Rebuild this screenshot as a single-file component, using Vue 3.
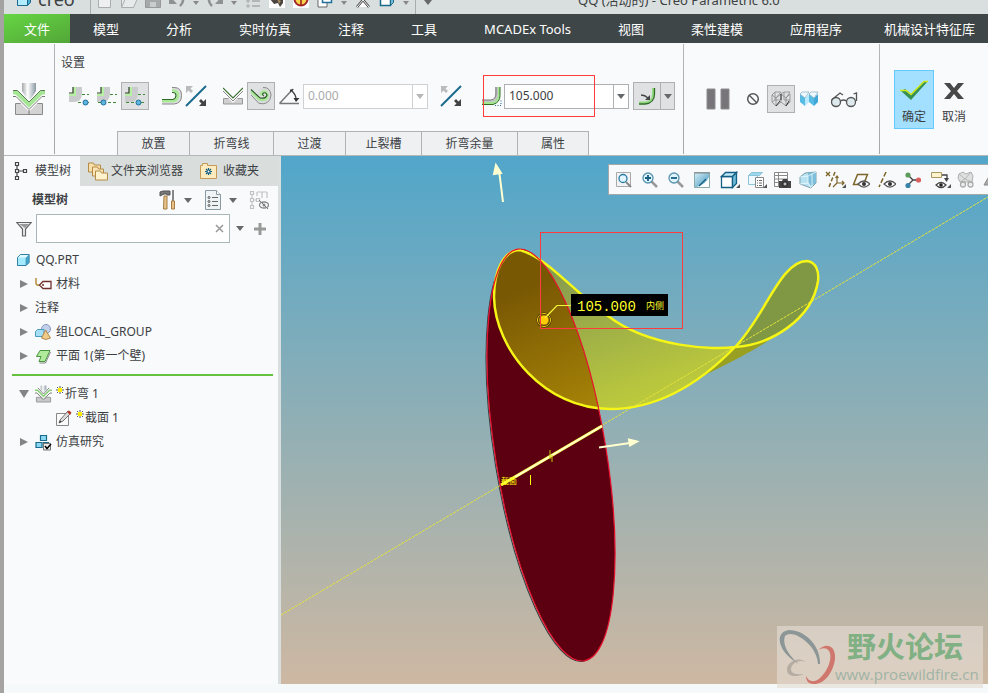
<script setup>
import { h, ref } from 'vue'

// Inner markup of every icon, keyed by name: [width, height, markup]
const icons = {
  cube: [16, 16, '<path d="M1.5 4.5h10v10h-10z" fill="#b3ecff" stroke="#1b6a8c"/><path d="M1.5 4.5l3-3h10l-3 3z" fill="#e6faff" stroke="#1b6a8c"/><path d="M11.5 4.5l3-3v10l-3 3z" fill="#4aa9cf" stroke="#1b6a8c"/>'],
  cubeWhite: [16, 16, '<path d="M1.5 4.500h10v10h-10z" fill="#fff" stroke="#1b6a8c" stroke-width="1.500"/><path d="M11.5 4.5l3-3v10l-3 3z" fill="#6db9d6" stroke="#1b6a8c"/>'],
  part: [14, 14, '<path d="M1.500 4.500L4.500 1.500H13V9.500L10 12.500H1.500z" fill="#a5eaff" stroke="#2f7fa3"/><path d="M10 12.500V4.500L13 1.500V9.500z" fill="#46a7cd" stroke="#2f7fa3" stroke-width=".6"/><path d="M2 4.500L4.700 2H12.500L10 4.500z" fill="#dff9ff"/>'],
  page: [14, 18, '<path d="M.5.5h12v17H.5z" fill="#eef0f0" stroke="#a9adad"/>'],
  open: [17, 18, '<path d="M.5 17V3h5l2 2h6v4" fill="#e7eaea" stroke="#a9adad"/><path d="M.5 17.500l4-9h12l-4 9z" fill="#e7eaea" stroke="#a9adad"/>'],
  save: [16, 18, '<path d="M.5.5h15v17H.5z" fill="#a6a9a9" stroke="#999"/><path d="M3 1h10v9H3z" fill="#e4e6e6"/><path d="M5 12h6v5H5z" fill="#c9cccc"/>'],
  undo: [18, 18, '<path d="M4 6c8-4 15 3 8 10" fill="none" stroke="#8e9292" stroke-width="2.500"/><path d="M1 5v9h8z" fill="#8e9292"/>'],
  redo: [18, 18, '<path d="M14 6C6 2-1 9 6 16" fill="none" stroke="#8e9292" stroke-width="2.500"/><path d="M17 5v9H9z" fill="#8e9292"/>'],
  list: [15, 18, '<path d="M1 5h2v2H1zM1 10h2v2H1zM1 15h2v2H1z" fill="none" stroke="#a5a9a9"/><path d="M6 6h8M6 11h8M6 16h8" stroke="#a5a9a9" stroke-width="1.500"/>'],
  photo: [16, 18, '<path d="M0 0h16v18H0z" fill="#fff"/><path d="M2 4l6 2 6-3v10l-3 4-2-4-4 1-4-5z" fill="#4c4540"/><path d="M8 9l4 2-2 3z" fill="#a58b60"/>'],
  gauge: [16, 18, '<path d="M0 0h16v18H0z" fill="#fff"/><circle cx="8" cy="9" r="6.500" fill="#f8d54c" stroke="#a3262b" stroke-width="2"/><path d="M8 9l4-6M8 9v6M3 9h10" stroke="#9c1515" stroke-width="1.500"/>'],
  windows: [16, 18, '<path d="M1 9h9v8H1z" fill="#fff" stroke="#666"/><path d="M5.500 3.500h9v9h-9z" fill="#fff" stroke="#1f6f9a" stroke-width="1.500"/>'],
  closewin: [14, 18, '<path d="M1 17l6-7 6 7" fill="#fff" stroke="#444" stroke-width="2.500"/><path d="M1 17l6-7 6 7" fill="none" stroke="#fff"/>'],
  bend: [32, 32, '<path d="M9 0h14v8l-5 8h-4L9 8z" fill="url(#steel)"/><path d="M2.500 20.500h9l4.500 5 4.500-5h9v11h-27z" fill="#d3d3d3" stroke="#8a8a8a"/><path d="M0 10h3l13 13 13-13h3" fill="none" stroke="#fff" stroke-width="8"/><path d="M0 9.500h3.500L16 22l12.500-12.500H32" fill="none" stroke="#a5e696" stroke-width="4"/><path d="M0 7.500h4.500L16 19 27.500 7.500H32" fill="none" stroke="#5c7a54"/><path d="M0 13.500h3L16 26.500l13-13h3M16 27v5" fill="none" stroke="#777"/>'],
  bendS: [18, 18, '<path d="M6 0h6v4l-3 4-3-4z" fill="url(#steel)"/><path d="M1.500 12.500h4L9 15l3.500-2.500h4v5h-15z" fill="#c9c9c9" stroke="#999"/><path d="M0 5h2.500L9 11.500 15.500 5H18" fill="none" stroke="#fff" stroke-width="5"/><path d="M0 5h2.500L9 11.500 15.500 5H18" fill="none" stroke="#82cd72" stroke-width="1.500"/><path d="M0 8h2l7 6.500L16 8h2M3 2.500l6 6.500 6-6.500" fill="none" stroke="#777"/>'],
  side1: [24, 20, '<path d="M2 8h6V1h7v6q0 9-8 9H2z" fill="#c9cbcd"/><path d="M2 8h4V1h3v9H2z" fill="#b7efa4"/><path d="M2 7h4V1" fill="none" stroke="#2c3a28" stroke-width="1.200"/><path d="M15 8.500h7M11 16.500h11" stroke="#3f8a35" stroke-dasharray="3 2"/><circle cx="18.500" cy="16.500" r="2.500" fill="#5cb6e0" stroke="#1f6f9a"/>'],
  side2: [24, 20, '<path d="M2 8h6V1h7v6q0 9-8 9H2z" fill="#c9cbcd"/><path d="M2 8h4V1h3v9H2z" fill="#b7efa4"/><path d="M2 7h4V1" fill="none" stroke="#2c3a28" stroke-width="1.200"/><path d="M15 8.500h7M3 16.500h19" stroke="#3f8a35" stroke-dasharray="3 2"/><circle cx="8.500" cy="16.500" r="2.500" fill="#5cb6e0" stroke="#1f6f9a"/>'],
  side3: [24, 20, '<path d="M2 8h6V1h7v6q0 9-8 9H2z" fill="#c9cbcd"/><path d="M2 8h4V1h3v9H2z" fill="#b7efa4"/><path d="M2 7h4V1" fill="none" stroke="#2c3a28" stroke-width="1.200"/><path d="M15 8.500h7M3 16.500h19" stroke="#3f8a35" stroke-dasharray="3 2"/><circle cx="15.500" cy="16.500" r="2.500" fill="#5cb6e0" stroke="#1f6f9a"/>'],
  hook: [20, 20, '<path d="M10 3h1q7 0 7 6.500T11 16H0" fill="none" stroke="#dcdedf" stroke-width="4"/><path d="M10 1.500h2q7.500 0 7.500 8t-7.500 8.500H0" fill="none" stroke="#888"/><path d="M10 4.500h1q5 0 5 5t-5 5.500H0" fill="none" stroke="#a6e894" stroke-width="2.500"/><path d="M10 6.500h1q3 0 3 3t-3 4H0" fill="none" stroke="#2f6b25" stroke-width="1.200"/>'],
  flip: [22, 22, '<path d="M1 21L21 1" stroke="#1b6a8c" stroke-width="2"/><path d="M1 1h7L5.500 3.500 8 6 6 8 3.500 5.500 1 8z" fill="#b9bbbd"/><path d="M21 21h-7l2.500-2.500L14 16l2-2 2.500 2.500L21 14z" fill="#444"/>'],
  vee: [20, 18, '<path d="M.500 11.500h6L10 14l3.500-2.500h6v5.500H.500z" fill="#d0d0d0" stroke="#999"/><path d="M0 3l10 10L20 3" fill="none" stroke="#fff" stroke-width="4"/><path d="M0 1l10 10L20 1" fill="none" stroke="#37732b" stroke-width="1.200"/><path d="M0 4l10 10L20 4" fill="none" stroke="#888"/>'],
  spiral: [22, 20, '<path d="M1 7l8 8q10 2 11-6-1-7-7-6-5 2-3 6" fill="none" stroke="#d9dbdb" stroke-width="3"/><path d="M1 9l8 8.500q11 2 12-8.500-1-8-8-7.500" fill="none" stroke="#8a8c8c"/><path d="M1 5.500l8 8q8 2 9-4-1-5-5-4-3 1.500-1.500 4" fill="none" stroke="#a6e894" stroke-width="2"/><path d="M1 3.500l9 8.500q6 1 7-3-1-3-3.500-2-2 1.500.500 3" fill="none" stroke="#2f5e28" stroke-width="1.200"/>'],
  angle: [22, 18, '<path d="M1.500 16.500H21M1.500 16.500L15 2" fill="none" stroke="#777" stroke-width="1.500"/><path d="M14 4q4 4 4 8" fill="none" stroke="#444" stroke-width="1.300"/><path d="M12 5.500V2.500h4zM15.500 11h6L18 15z" fill="#333"/>'],
  length: [20, 20, '<path d="M0 16h10q5-1 5-7V1" fill="none" stroke="#c3c5c7" stroke-width="4"/><path d="M0 14h9q5-1 5-6V1" fill="none" stroke="#777"/><path d="M0 17h11q6-2 6-8V1" fill="none" stroke="#a0e78d" stroke-width="2"/><path d="M0 18.500h11q7-2 7-9V1" fill="none" stroke="#2f6b25"/><path d="M13 19.500h6v-6" fill="none" stroke="#1b6a8c" stroke-dasharray="1 1.500"/>'],
  inner: [18, 18, '<path d="M1 15.500h6q8-1 8-9V1" fill="none" stroke="#91da80" stroke-width="2"/><path d="M1 17h6q9.500-1 9.500-10V1" fill="none" stroke="#2f6b25" stroke-width="1.300"/><path d="M3 8q4 0 7 3" fill="none" stroke="#444" stroke-width="1.300"/><path d="M12 8v5H7z" fill="#444"/>'],
  pause: [24, 22, '<path d="M1 1h8v20H1zM15 1h8v20h-8z" fill="#777579" stroke="#8f8d91"/>'],
  none: [14, 14, '<circle cx="7" cy="7" r="5.300" fill="none" stroke="#555" stroke-width="1.500"/><path d="M3 3l8 8" stroke="#555" stroke-width="1.500"/>'],
  wire: [20, 18, '<path d="M1 5l4 3v8l-4-4zM5 8l5-4v8l-5 4M10 4l5 4v8l-5-4M15 8l4-4v8l-4 4M1 5l3-3h6l-5 6M10 4l3-2h6l-4 6M4 2v8l-3 2M13 2v8M4 10h6M13 10h6" fill="none" stroke="#8a8c8e" stroke-width=".8"/><path d="M5 16l4-5M10 4v6M15 16l3-5" fill="none" stroke="#333"/>'],
  solid: [20, 16, '<path d="M1 3l5 4v8l-5-4z" fill="#56bce4"/><path d="M6 7l4-4v8l-4 4z" fill="#b9eaff"/><path d="M10 3l5 4v8l-5-4z" fill="#56bce4"/><path d="M15 7l4-4v8l-4 4z" fill="#3fa8d8"/><path d="M1 3l2-2h7L6 7zM10 3l2-2h7l-4 6z" fill="#eefaff" stroke="#88abb9" stroke-width=".7"/>'],
  glasses: [28, 18, '<circle cx="6" cy="12" r="4.500" fill="#dde9ec" stroke="#555" stroke-width="1.300"/><circle cx="21" cy="12" r="4.500" fill="#dde9ec" stroke="#555" stroke-width="1.300"/><path d="M10.500 11q3-2 6 0M1.500 10L10 3l3 2M26.500 11V3l-3 1" fill="none" stroke="#555" stroke-width="1.300"/>'],
  check: [30, 22, '<path d="M2 11l4-2 6 5L25 1h4L12 20z" fill="#369155"/><path d="M1 10.500h6l5 4L25 1.500h4" fill="none" stroke="#cdea1b" stroke-width="1.500"/>'],
  cross: [22, 18, '<path d="M1 1h6l4 5 4-5h6l-7 8 7 8h-6l-4-5-4 5H1l7-8z" fill="#484848"/>'],
  tree: [14, 20, '<path d="M1.500 1.500h3v3h-3zM1.500 8.500h3v3h-3zM1.500 15.500h3v3h-3zM9.500 8.500h3v3h-3zM3 5v3M3 12v3M5 10h4" fill="none" stroke="#444" stroke-width="1.200"/>'],
  folders: [20, 20, '<path d="M.5 2h5l1 2h6v7H.5z" fill="#f8dfa9" stroke="#b48a47"/><path d="M4.500 6h5l1 2h5v7h-11z" fill="#fae5b7" stroke="#b48a47"/><path d="M7.500 10h5l1 2h6v7h-12z" fill="#fff2cc" stroke="#b48a47"/>'],
  favorite: [18, 16, '<path d="M.5 2.500h2v-2h5v2h9v13H.500z" fill="#fdebc0" stroke="#c49a55"/><path d="M8.500 5v7M5 8.500h7M6 6l5 5M11 6l-5 5" stroke="#115e80" stroke-width="1.200"/><circle cx="8.500" cy="8.500" r="1" fill="#fff"/>'],
  hammer: [18, 20, '<path d="M1 2l3-1h7v4H8V4H5L1 6z" fill="#777" stroke="#555"/><path d="M5 6h3v13H4.500z" fill="#e8c288" stroke="#a37d45"/><path d="M14 0v11" stroke="#888" stroke-width="2"/><path d="M12.500 11h3v8h-3z" fill="#e8c288" stroke="#a37d45"/>'],
  doc: [18, 20, '<path d="M1.500.5h11l4 4v15h-15z" fill="#eef4f6" stroke="#8a99a1"/><path d="M12.500.5v4h4" fill="#fff" stroke="#8a99a1"/><path d="M8 7.500h6M8 11.500h6M8 15.500h6" stroke="#666"/><circle cx="5" cy="7.500" r="1" fill="none" stroke="#555"/><circle cx="5" cy="11.500" r="1" fill="none" stroke="#555"/><circle cx="5" cy="15.500" r="1" fill="none" stroke="#555"/>'],
  hide: [20, 20, '<path d="M1.500 1.500h3v3h-3zM1.500 8.500h3v3h-3zM1.500 15.500h3v3h-3zM7.500 8.500h3v3h-3zM3 5v3M3 12v3M5 10h2M8 2h10M13 2v6M18 2v6M8 2v4" fill="none" stroke="#c1c3c3" stroke-width="1.200"/><ellipse cx="15" cy="15" rx="4.500" ry="3" fill="none" stroke="#888" stroke-width="1.300"/><circle cx="15" cy="15" r="1.500" fill="#888"/><path d="M10 10l9 9" stroke="#777"/>'],
  funnel: [16, 16, '<path d="M.700 1.500h14.600L9.500 8v7h-3V8z" fill="#eee" stroke="#666" stroke-width="1.200"/><path d="M3 3h10L9 7z" fill="#999"/>'],
  tag: [17, 14, '<path d="M1 1v5q0 3 5 2" fill="none" stroke="#b78c3f" stroke-width="1.500"/><path d="M8 4.500h8v7H8L4.500 8z" fill="#fff" stroke="#70332b" stroke-width="1.300"/><circle cx="8" cy="8" r="1" fill="#70332b"/>'],
  group: [17, 16, '<circle cx="11" cy="5" r="4.500" fill="#c3d0ea" stroke="#8798bd"/><path d="M.500 7.500l2-2H9v5l-2 2H.500z" fill="#a3def5" stroke="#4b9bbd"/><path d="M10.500 6l5 8q-5 3-9 0z" fill="#efca86" stroke="#ae8a52"/>'],
  plane: [16, 15, '<path d="M4.500 1.500h10L9.500 12.500h-6l2-5H1z" fill="#b0eb9c" stroke="#4a9340"/><path d="M4 14h6l5-11" fill="none" stroke="#888"/>'],
  sketch: [17, 17, '<path d="M1.500 3.500h12v12h-12z" fill="#fbfbfb" stroke="#888"/><path d="M4 13l1-3 8-9 3 2-8 8z" fill="#ddd" stroke="#555" stroke-width=".8"/><path d="M12 2l2-1.500 2.500 2L15 5z" fill="#b63c2e"/><path d="M4 13l1.500-2.500 1 1z" fill="#222"/>'],
  study: [17, 17, '<path d="M5.500 1.500h6v5h-6zM1 8.500h6v5H1zM8.500 8.500h5v5h-5z" fill="#8bd8f4" stroke="#1b6a8c" stroke-width="1.200"/><path d="M8.500 9.500h7v6.500h-7z" fill="#eee" stroke="#777"/><path d="M10 12l2 2.500 4-4.500" fill="none" stroke="#000" stroke-width="1.500"/>'],
  star: [8, 8, '<path d="M4 0v8M0 4h8M1 1l6 6M7 1L1 7" stroke="#333" stroke-width=".8"/><path d="M2 2h4v4H2z" fill="#ffee00"/>'],
  zfit: [18, 18, '<path d="M1.500 1.500h14v14h-14z" fill="#f1f3f4" stroke="#aaa"/><circle cx="8" cy="7.500" r="4" fill="#e2f6ff" stroke="#287ba3" stroke-width="1.300"/><path d="M11 11l5 5" stroke="#888" stroke-width="2"/>'],
  zin: [18, 18, '<path d="M10 10l6 6" stroke="#999" stroke-width="2.500"/><circle cx="7" cy="7" r="5" fill="#e0f4fc" stroke="#5793af" stroke-width="1.300"/><path d="M7 4v6M4 7h6" stroke="#155f85" stroke-width="1.800"/>'],
  zout: [18, 18, '<path d="M10 10l6 6" stroke="#999" stroke-width="2.500"/><circle cx="7" cy="7" r="5" fill="#e0f4fc" stroke="#5793af" stroke-width="1.300"/><path d="M4 7h6" stroke="#155f85" stroke-width="1.800"/>'],
  repaint: [18, 18, '<path d="M1.500 1.500h15v15h-15z" fill="url(#sky)" stroke="#8aa"/><path d="M4 16q9-3 12-10v10z" fill="#fff"/><path d="M6 15l7-7" stroke="#155f85" stroke-width="1.300"/><path d="M1 2h16" stroke="#888"/>'],
  shade: [18, 18, '<path d="M1.500 5.500h11v11h-11z" fill="#fff" stroke="#155f85" stroke-width="1.300"/><path d="M1.500 5.500l4-4h11l-4 4z" fill="#bdeaf9" stroke="#155f85" stroke-width="1.300"/><path d="M12.500 5.500l4-4v11l-4 4z" fill="#6db9d6" stroke="#155f85" stroke-width="1.300"/>'],
  saved: [18, 18, '<path d="M1.500 4.500h9v9h-9z" fill="#eefaff" stroke="#8bc4d9"/><path d="M1.500 4.500l3-3h11l-3 3z" fill="#9bd9ee" stroke="#8bc4d9"/><path d="M8.500 6.500h8v10h-8z" fill="#fff" stroke="#888"/><path d="M10 9.500h1M12 9.500h3M10 12h1M12 12h3M10 14.500h1M12 14.500h3" stroke="#666"/>'],
  manager: [18, 18, '<path d="M1.500 1.500h13v14h-13zM1 4.500h13M1 8h13M1 11.500h13M5.500 2v14" fill="#fff" stroke="#888"/><path d="M6 10h3l1-2h4l1 2h3v7H6z" fill="#444"/><circle cx="12" cy="13" r="2.200" fill="#bbb" stroke="#111"/>'],
  persp: [18, 18, '<path d="M1 6l5-4 11-1v11l-5 5-11-4z" fill="#b7e2f1" stroke="#7d9eac"/><path d="M9 2l8-1v11l-5 3-3-4z" fill="#7dbfda"/><path d="M1 6l8-1v7l-8 1M9 12l3 5M9 5l8-4M13 3v13" fill="none" stroke="#eefaff" stroke-width=".8"/>'],
  datum: [20, 18, '<path d="M1 1l4 4M5 1L1 5" stroke="#7d6428" stroke-width="1.300"/><path d="M10 1L4 16" stroke="#7d6428" stroke-width="1.500" stroke-dasharray="4 2"/><path d="M12 5v7h7M12 12l-4 4M17 10l2 2-2 2M10.500 7L12 5l1.500 2" fill="none" stroke="#7d6428" stroke-width="1.200"/>'],
  planeEye: [18, 18, '<path d="M5.500 3.500h10l-4 10H1.500z" fill="none" stroke="#7d6428" stroke-width="1.500"/><path d="M6 13q6-6 12 0-6 6-12 0z" fill="#fff" stroke="#555" stroke-width="1.200"/><circle cx="12" cy="13" r="2" fill="#333"/>'],
  axisEye: [18, 18, '<path d="M8 1L1 16" stroke="#7d6428" stroke-width="1.500" stroke-dasharray="5 2"/><path d="M6 13q6-6 12 0-6 6-12 0z" fill="#fff" stroke="#555" stroke-width="1.200"/><circle cx="12" cy="13" r="2" fill="#333"/>'],
  spin: [18, 18, '<path d="M4 4l5 5h5M9 9l-5 5" fill="none" stroke="#444" stroke-width="1.300"/><circle cx="4" cy="4" r="2.600" fill="#5c9c5c"/><circle cx="14.500" cy="9" r="2.600" fill="#da5f5f"/><circle cx="4" cy="14.500" r="2.600" fill="#3a84ab"/>'],
  noteEye: [20, 18, '<path d="M1.500 1.500h10v5h-10z" fill="#fff3cd" stroke="#aa9660"/><path d="M12 4h5v4" fill="none" stroke="#444" stroke-width="1.300"/><path d="M14 7h5l-2.500 4z" fill="#444"/><path d="M6 14q5-5 10 0-5 5-10 0z" fill="#fff" stroke="#444" stroke-width="1.200"/><circle cx="11" cy="14" r="1.800" fill="#222"/>'],
  meshGlass: [18, 18, '<path d="M2 3l4-2 3 2 5-2 2 4-1 6H3L1 7z" fill="#dedfdf" stroke="#b0b0b0"/><path d="M2 3l6 5 6-7M8 8l7 3M3 11l5-3" fill="none" stroke="#b8b8b8"/><circle cx="6" cy="13.500" r="2.500" fill="#eee" stroke="#aaa" stroke-width="1.300"/><circle cx="13.500" cy="13.500" r="2.500" fill="#eee" stroke="#aaa" stroke-width="1.300"/>'],
  cone: [18, 18, '<path d="M1 14L8 2l8 12z" fill="#aaa" stroke="#888"/>'],
}

function Ic({ name }) {
  const [w, hgt, inner] = icons[name]
  return h('svg', { width: w, height: hgt, viewBox: `0 0 ${w} ${hgt}`, 'aria-hidden': 'true', innerHTML: inner })
}
Ic.props = ['name']

const quick = [
  ['page', '新建'], ['open', '打开'], ['save', '保存'], ['undo', '撤消'], ['', '撤消列表'],
  ['redo', '重做'], ['', '重做列表'], ['list', '重新生成'], ['photo', '外观'], ['gauge', '测量'],
  ['windows', '窗口'], ['', '窗口列表'], ['closewin', '关闭'], ['cubeWhite', '模型显示'], ['', '显示列表'],
]
const menus = ['模型', '分析', '实时仿真', '注释', '工具', 'MCADEx Tools', '视图', '柔性建模', '应用程序', '机械设计特征库']
const panels = ['放置', '折弯线', '过渡', '止裂槽', '折弯余量', '属性']
const viewTools = [
  ['zfit', '重新调整'], ['zin', '放大'], ['zout', '缩小'], ['repaint', '重画'], ['shade', '显示样式', true],
  ['saved', '已保存方向', true], ['manager', '视图管理器'], ['persp', '透视图'], ['datum', '基准显示', true],
  ['planeEye', '平面显示'], ['axisEye', '轴显示'], ['spin', '旋转中心'], ['noteEye', '注释显示', true],
  ['meshGlass', '仿真显示'], ['cone', '模拟'],
]
const upper = [
  { icon: 'tag', text: '材料' },
  { icon: '', text: '注释' },
  { icon: 'group', text: '组LOCAL_GROUP' },
  { icon: 'plane', text: '平面 1(第一个壁)' },
]
const angle = ref('0.000')
const length = ref('105.000')
const filter = ref('')
</script>

<template>
  <div class="app">
    <svg class="defs" width="0" height="0" aria-hidden="true">
      <defs>
        <linearGradient id="steel"><stop offset="0" stop-color="#a5a8aa" /><stop offset=".4" stop-color="#fff" /><stop offset="1" stop-color="#8a9aa4" /></linearGradient>
        <linearGradient id="sky" x1="0" y1="0" x2="1" y2="1"><stop offset="0" stop-color="#d8f1fa" /><stop offset="1" stop-color="#3d91b8" /></linearGradient>
      </defs>
    </svg>

    <header class="titlebar">
      <div class="brand"><Ic name="cube" /><span>creo</span></div>
      <div class="quick">
        <button v-for="([icon, label], i) in quick" :key="i" :class="{ slim: !icon }" :aria-label="label">
          <Ic v-if="icon" :name="icon" /><i v-else class="caret"></i>
        </button>
      </div>
      <button class="more" aria-label="自定义"><i class="caret"></i></button>
      <div class="doc-title">QQ (活动的) - Creo Parametric 6.0</div>
    </header>

    <nav class="menubar">
      <button class="file">文件</button>
      <button v-for="m in menus" :key="m">{{ m }}</button>
    </nav>

    <section class="ribbon">
      <div class="feature"><Ic name="bend" /></div>
      <div class="settings">
        <div class="heading">设置</div>
        <div class="controls">
          <div class="group">
            <button class="tool" aria-label="外侧"><Ic name="side1" /></button>
            <button class="tool" aria-label="折弯线"><Ic name="side2" /></button>
            <button class="tool on" aria-label="另一侧"><Ic name="side3" /></button>
          </div>
          <div class="group">
            <button class="tool narrow" aria-label="固定侧"><Ic name="hook" /></button>
            <button class="tool narrow" aria-label="反向"><Ic name="flip" /></button>
          </div>
          <div class="group">
            <button class="tool" aria-label="角度折弯"><Ic name="vee" /></button>
            <button class="tool on" aria-label="轧折弯"><Ic name="spiral" /></button>
            <label class="tool" for="angle"><Ic name="angle" /></label>
            <div class="combo off">
              <input id="angle" v-model="angle" aria-label="角度" disabled />
              <button aria-label="角度列表" disabled><i class="caret"></i></button>
            </div>
          </div>
          <button class="tool narrow" aria-label="更改方向"><Ic name="flip" /></button>
          <div class="group marked">
            <label class="len" for="length"><Ic name="length" /></label>
            <div class="combo">
              <input id="length" v-model="length" aria-label="半径" />
              <button aria-label="半径列表"><i class="caret"></i></button>
            </div>
            <div class="split">
              <button aria-label="内侧"><Ic name="inner" /></button>
              <button class="drop" aria-label="标注列表"><i class="caret"></i></button>
            </div>
            <div class="mark"></div>
          </div>
        </div>
        <div class="panels">
          <button v-for="p in panels" :key="p">{{ p }}</button>
        </div>
      </div>
      <div class="preview">
        <button class="tool" aria-label="暂停"><Ic name="pause" /></button>
        <div class="group">
          <button class="tool" aria-label="无预览"><Ic name="none" /></button>
          <button class="tool on" aria-label="分离"><Ic name="wire" /></button>
          <button class="tool" aria-label="连接"><Ic name="solid" /></button>
        </div>
        <button class="tool" aria-label="特征预览"><Ic name="glasses" /></button>
      </div>
      <div class="finish">
        <button class="ok"><Ic name="check" /><span>确定</span></button>
        <button><Ic name="cross" /><span>取消</span></button>
      </div>
    </section>

    <main class="work">
      <aside class="side">
        <div class="tabs">
          <button class="active"><Ic name="tree" />模型树</button>
          <button class="browse"><Ic name="folders" />文件夹浏览器</button>
          <button class="fav"><Ic name="favorite" />收藏夹</button>
        </div>
        <div class="side-head">
          <h2>模型树</h2>
          <button aria-label="设置"><Ic name="hammer" /><i class="caret"></i></button>
          <button aria-label="显示"><Ic name="doc" /><i class="caret"></i></button>
          <button aria-label="隐藏"><Ic name="hide" /></button>
        </div>
        <div class="search">
          <label for="filter"><Ic name="funnel" /></label>
          <div class="field">
            <input id="filter" v-model="filter" aria-label="过滤" />
            <button aria-label="清除" @click="filter = ''">
              <svg width="9" height="9" viewBox="0 0 9 9"><path d="M1 1l7 7M8 1L1 8" stroke="#999" stroke-width="1.500" /></svg>
            </button>
          </div>
          <button aria-label="过滤列表"><i class="caret"></i></button>
          <button class="add" aria-label="添加"><svg width="12" height="12" viewBox="0 0 12 12"><path d="M6 0v12M0 6h12" stroke="#999" stroke-width="3" /></svg></button>
        </div>
        <ul class="tree">
          <li class="root"><Ic name="part" /><span>QQ.PRT</span></li>
          <li v-for="n in upper" :key="n.text">
            <i class="arrow"></i><Ic v-if="n.icon" class="node" :name="n.icon" /><span>{{ n.text }}</span>
          </li>
          <li class="insert" role="separator"></li>
          <li><i class="arrow opened"></i><Ic class="node" name="bendS" /><Ic class="new" name="star" /><span>折弯 1</span></li>
          <li class="child"><Ic class="node" name="sketch" /><Ic class="new" name="star" /><span>截面 1</span></li>
          <li><i class="arrow"></i><Ic class="node" name="study" /><span>仿真研究</span></li>
        </ul>
      </aside>

      <section class="view">
        <svg class="scene" viewBox="281 156 707 528" preserveAspectRatio="xMinYMin slice">
          <defs>
            <linearGradient id="sheet" gradientUnits="userSpaceOnUse" x1="570" y1="265" x2="620" y2="410"><stop offset="0" stop-color="#869a50" /><stop offset="1" stop-color="#bdca3c" /></linearGradient>
            <linearGradient id="brown" gradientUnits="userSpaceOnUse" x1="520" y1="290" x2="570" y2="410"><stop offset="0" stop-color="#795804" /><stop offset="1" stop-color="#a48107" /></linearGradient>
            <clipPath id="disk"><ellipse cx="551" cy="455" rx="208.500" ry="55.300" transform="rotate(80.800 551 455)" /></clipPath>
          </defs>
          <ellipse cx="550" cy="456" rx="208" ry="55.300" transform="rotate(80.800 550 456)" fill="none" stroke="#333b40" />
          <ellipse cx="551" cy="455" rx="208.500" ry="55.300" transform="rotate(80.800 551 455)" fill="#5c0011" />
          <path d="M735 347L772 338Q758 349 703 376Z" fill="#99a021" />
          <path d="M520 250C504 250 494 270 494 297C495 350 545 409 610 409C660 409 703 380 735 347C715 350 650 348 608 316C575 293 548 258 520 250Z" fill="url(#sheet)" />
          <path d="M735 347C765 317 780 261 807 261C817 262 819 273 818 281C812 320 770 345 735 347Z" fill="#809743" />
          <path d="M520 250C504 250 494 270 494 297C495 350 545 409 610 409C660 409 703 380 735 347C715 350 650 348 608 316C575 293 548 258 520 250Z" fill="url(#brown)" clip-path="url(#disk)" />
          <path d="M281 615L988 197" stroke="#e4e43a" stroke-width="1" stroke-dasharray="3 1" />
          <path d="M520 250C504 250 494 270 494 297C495 350 545 409 610 409C660 409 703 380 735 347C765 317 780 261 807 261C817 262 819 273 818 281C812 320 770 345 735 347C715 350 650 348 608 316C575 293 548 258 520 250Z" fill="none" stroke="#f6f616" stroke-width="2.500" />
          <ellipse cx="551" cy="455" rx="208.500" ry="55.300" transform="rotate(80.800 551 455)" fill="none" stroke="#e8102c" stroke-width="1.200" />
          <path d="M501 485L602 426" stroke="#fbfb4a" stroke-width="3" />
          <path d="M515 477L602 426" stroke="#ffffc8" stroke-width="2" />
          <path d="M550 450v9M552 455v7" stroke="#c8c800" stroke-width="1" />
          <text class="sketch-label" x="501" y="484">截面</text>
          <path d="M530.500 475v10" stroke="#ffff00" />
          <g fill="#ffffd0" stroke="#ffffd0">
            <path d="M503 202L499.500 174" stroke-width="2" /><path d="M496 165l-2 9 7-1z" stroke-width="2" />
            <path d="M599 447.500L630 443" stroke-width="2" /><path d="M637 441.500l-8-2 1 6z" stroke-width="2" />
          </g>
          <circle cx="544" cy="320" r="6.500" fill="none" stroke="#2b2000" stroke-width="2" />
          <circle cx="544" cy="320" r="6.500" fill="none" stroke="#ffd21a" stroke-width="1" />
          <circle cx="544" cy="320" r="4.500" fill="#ffca00" />
          <path d="M545 318L557 305.500H571" fill="none" stroke="#f6f640" stroke-width="1.200" />
          <rect x="571" y="294" width="97" height="22" fill="#000" />
          <text class="dim" x="577" y="311">105.000</text>
          <text class="dim-side" x="646" y="309">内侧</text>
          <rect x="540.500" y="232.500" width="142" height="96" fill="none" stroke="#ff3b3b" />
        </svg>
        <div class="viewbar">
          <button v-for="[icon, label, menu] in viewTools" :key="icon" :class="{ menu }" :aria-label="label"><Ic :name="icon" /></button>
        </div>
      </section>
    </main>
    <footer class="status"></footer>

    <div class="watermark">
      <svg width="58" height="60" viewBox="0 0 58 60" fill="none" aria-hidden="true">
        <path fill="#8c9696" d="M43 38C44 20 28 4 12 4C-3 6 0 26 22 38C11 29 5 18 8 10C15 2 40 18 41 38Z" />
        <path fill="#d0776d" d="M40 25C50 15 59 20 58 33C56 48 46 59 36 58C32 58 29 55 29 50C32 56 37 57 43 52C51 45 56 31 52 25C49 21 44 22 40 25Z" />
        <path fill="#b5aca2" d="M29 36C22 30 10 35 10 44C10 50 18 52 27 48C20 49 15 48 14 44C14 37 22 33 29 36Z" />
      </svg>
      <div class="wm-text"><strong>野火论坛</strong><span>www.proewildfire.cn</span></div>
    </div>
  </div>
</template>

<style>
body {
  margin: 0;
}
</style>

<style scoped>
* {
  box-sizing: border-box;
}
.app {
  position: relative;
  display: flex;
  flex-direction: column;
  min-height: 100vh;
  overflow: hidden;
  border-left: 4px solid #a5a2a2;
  background: #f8fafc;
  color: #3c4043;
  font: 12px/18px 'Noto Sans', 'Noto Sans CJK SC', sans-serif;
}
.defs {
  position: absolute;
}
button {
  display: flex;
  align-items: center;
  justify-content: center;
  padding: 0;
  border: 0;
  background: none;
  color: inherit;
  font: inherit;
  white-space: nowrap;
}
input {
  min-width: 0;
  border: 0;
  outline: 0;
  background: none;
  color: inherit;
  font: inherit;
}
svg {
  flex: none;
}
.caret {
  flex: none;
  border: 4px solid transparent;
  border-top: 5px solid #66696b;
  border-bottom: 0;
}

.titlebar {
  display: flex;
  align-items: flex-end;
  height: 14px;
  overflow: hidden;
  background: #d9dfde;
}
.brand {
  display: flex;
  align-items: flex-end;
  gap: 6px;
  width: 87px;
  height: 24px;
  padding: 0 0 7px 12px;
  border-right: 1px solid #a9adad;
  font-size: 18px;
  line-height: 16px;
}
.quick {
  display: flex;
  height: 24px;
  margin-left: 2px;
  padding-bottom: 6px;
}
.quick button {
  width: 24px;
}
.quick .slim {
  width: 14px;
  padding-top: 8px;
}
.quick .caret {
  border-top-color: #888;
  border-width: 4px 3px 0;
}
.more {
  width: 24px;
  height: 14px;
  margin-left: 2px;
  padding-bottom: 9px;
  border-left: 1px solid #a9adad;
}
.doc-title {
  margin-left: 139px;
  padding-bottom: 5px;
  font-size: 13px;
  white-space: nowrap;
}

.menubar {
  display: flex;
  height: 29px;
  overflow: hidden;
  background: #3e4647;
  color: #fff;
  font-size: 13px;
}
.menubar button {
  flex: none;
  padding: 0 24px 0 23px;
}
.menubar button:last-child {
  padding: 0 18px;
}
.menubar .file {
  padding: 0 20px;
  background: linear-gradient(160deg, #66d544, #52a637);
}

.ribbon {
  display: flex;
  height: 113px;
  border-bottom: 1px solid #b2b7b8;
}
.ribbon > div + div {
  border-left: 1px solid;
  border-image: linear-gradient(transparent 2%, #b3b5b7 2%, #a5a7a9 98%, transparent 98%) 1;
}
.feature {
  display: flex;
  align-items: center;
  justify-content: center;
  width: 50px;
}
.settings {
  display: flex;
  flex-direction: column;
  width: 629px;
  padding-top: 11px;
}
.heading {
  padding-left: 6px;
}
.controls {
  display: flex;
  gap: 11px;
  margin-top: 10px;
  padding-left: 10px;
}
.group {
  display: flex;
  align-items: center;
}
.tool {
  display: flex;
  align-items: center;
  justify-content: center;
  width: 28px;
  height: 28px;
}
.narrow {
  width: 24px;
}
.on {
  border: 1px solid #aeb0b2;
  background: #dfe1e3;
}
.combo {
  display: flex;
  width: 125px;
  height: 25px;
  border: 1px solid #aeb0b2;
  background: #fff;
}
.combo input {
  flex: 1;
  padding: 0 4px;
}
.combo button {
  width: 15px;
  border-left: 1px solid #aeb0b2;
}
.combo.off {
  border-color: #cfd1d3;
  color: #a9abad;
}
.combo.off button {
  border-color: #cfd1d3;
}
.combo.off .caret {
  border-top-color: #b5b7b9;
}
.marked {
  position: relative;
}
.len {
  display: flex;
  justify-content: flex-end;
  width: 30px;
  padding-right: 2px;
}
.split {
  display: flex;
  width: 42px;
  height: 28px;
  margin-left: 4px;
  border: 1px solid #aeb0b2;
  background: #dfe1e3;
}
.split button {
  flex: 1;
}
.split .drop {
  flex: none;
  width: 14px;
  border-left: 1px solid #aeb0b2;
}
.mark {
  position: absolute;
  top: -7px;
  left: 9px;
  width: 112px;
  height: 42px;
  border: 1px solid #ff3b3b;
  pointer-events: none;
}
.panels {
  display: grid;
  grid-template-columns: 72px 84px 72px 76px 96px 72px;
  height: 24px;
  margin-top: auto;
  padding-left: 62px;
}
.panels button {
  border: 1px solid #b0b2b4;
  border-bottom: 0;
  border-right: 0;
  background: #eef0f2;
}
.panels button:last-child {
  border-right: 1px solid #b0b2b4;
}
.preview {
  display: flex;
  align-items: center;
  gap: 7px;
  width: 196px;
  padding-left: 20px;
}
.finish {
  display: flex;
  flex: 1;
  align-items: center;
  padding-left: 14px;
}
.finish button {
  flex-direction: column;
  justify-content: flex-end;
  gap: 5px;
  width: 40px;
  height: 59px;
  padding-bottom: 2px;
  border: 1px solid transparent;
}
.finish svg {
  height: 24px;
}
.finish .ok {
  border-color: #66c9fb;
  background: #a3e0ff;
}

.work {
  display: flex;
  flex: 1;
}
.side {
  flex: none;
  width: 277px;
  border-right: 3px solid #d9dfde;
  background: #f8fafb;
}
.tabs {
  display: flex;
  height: 30px;
  background: #d9dedd;
}
.tabs button {
  gap: 7px;
  padding: 0 9px 0 10px;
}
.tabs .active {
  background: #f8fafb;
}
.tabs .browse {
  gap: 3px;
  padding: 0 8px;
}
.tabs .fav {
  gap: 5px;
  padding: 0 9px;
}
.side-head {
  display: flex;
  align-items: center;
  gap: 12px;
  height: 28px;
  padding: 0 9px 0 28px;
}
.side-head h2 {
  flex: 1;
  margin: 0;
  font-size: 12px;
  font-weight: 600;
}
.side-head button {
  gap: 7px;
}
.search {
  display: flex;
  align-items: center;
  gap: 4px;
  padding: 0 12px;
}
.search label {
  display: flex;
}
.search > button {
  flex: none;
  width: 12px;
}
.search .add {
  margin-left: 4px;
}
.field {
  display: flex;
  flex: 1;
  min-width: 0;
  height: 29px;
  border: 1px solid #a9b7ba;
  background: #fff;
}
.field input {
  flex: 1;
}
.field button {
  flex: none;
  width: 20px;
}
.tree {
  margin: 0;
  padding: 5px 5px 0 8px;
  list-style: none;
}
.tree li {
  display: flex;
  align-items: center;
  height: 24px;
  padding-left: 8px;
}
.tree .root {
  gap: 6px;
  padding-left: 4px;
}
.arrow {
  width: 8px;
  margin-right: 7px;
  border: 4px solid transparent;
  border-right: 0;
  border-left: 8px solid #828587;
}
.arrow.opened {
  width: 10px;
  margin: 0 6px 0 -1px;
  border: 5px solid transparent;
  border-top: 8px solid #828587;
  border-bottom: 0;
}
.tree .node {
  width: 17px;
  margin-right: 4px;
}
.tree .new {
  align-self: flex-start;
  margin: 4px 1px 0 0;
}
.tree .child {
  padding-left: 43px;
}
.tree .insert {
  height: 2px;
  margin: 6px 0;
  background: #66c13f;
}

.view {
  position: relative;
  flex: 1;
  background: linear-gradient(#51a6ca, #90afb5 50%, #ceb8a2);
}
.scene {
  position: absolute;
  width: 100%;
  height: 100%;
}
.dim {
  fill: #ffff2a;
  font: 14px 'Liberation Mono', monospace;
}
.dim-side {
  fill: #ffff2a;
  font: 9px 'Noto Sans CJK SC', sans-serif;
}
.sketch-label {
  fill: #ffff00;
  font: 8px 'Noto Sans CJK SC', sans-serif;
}
.viewbar {
  position: absolute;
  top: 8px;
  right: 0;
  left: 327px;
  display: flex;
  height: 31px;
  overflow: hidden;
  padding-left: 2px;
  border: 1px solid #a3a9ab;
  border-right: 0;
  background: #f8f9fb;
}
.viewbar button {
  position: relative;
  flex: none;
  width: 26px;
}
.viewbar .menu {
  width: 27px;
}
.menu::after {
  position: absolute;
  right: 2px;
  bottom: 6px;
  border-bottom: 4px solid #555;
  border-left: 4px solid transparent;
  content: '';
}
.status {
  height: 9px;
  background: #f5f9fa;
}
.watermark {
  position: absolute;
  right: 5px;
  bottom: 5px;
  display: flex;
  width: 206px;
  height: 62px;
  background: rgba(228, 220, 210, 0.65);
}
.wm-text {
  display: flex;
  flex-direction: column;
  color: #a0b3a5;
  font-family: 'Open Sans', 'Noto Sans CJK SC', sans-serif;
  font-size: 15px;
}
.wm-text strong {
  padding: 2px 0 0 12px;
  color: #80b083;
  font-size: 29px;
  line-height: 37px;
}
</style>
